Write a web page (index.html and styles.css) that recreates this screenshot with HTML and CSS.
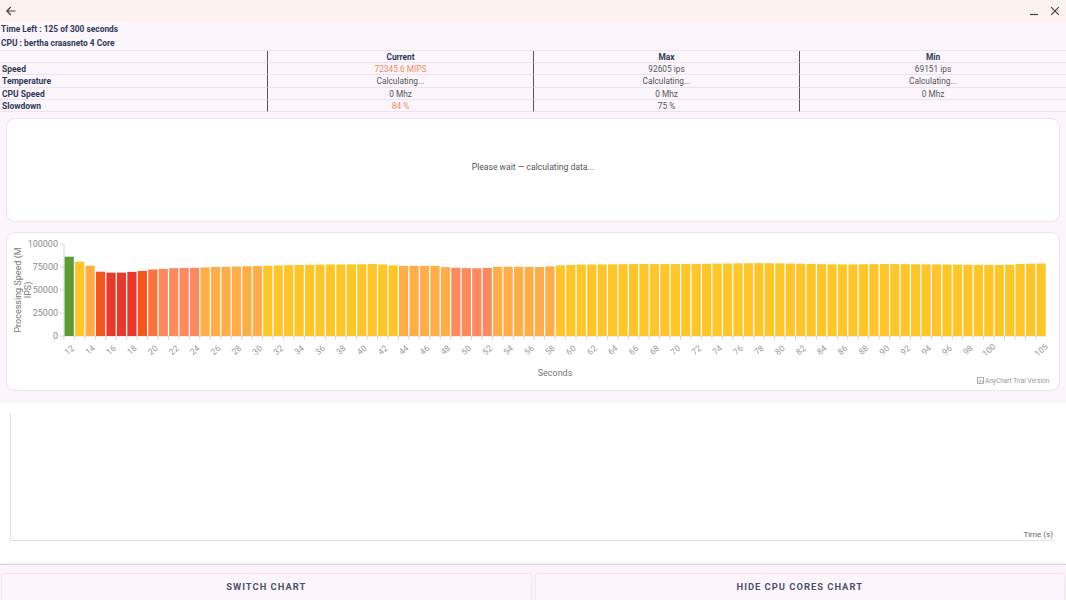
FILE: index.html
```html
<!DOCTYPE html>
<html lang="en">
    <head>
        <meta charset="UTF-8">
        <meta name="viewport" content="width=device-width, initial-scale=1.0">
        <title>CPU Benchmark</title>
        <link rel="stylesheet" href="styles.css">
    </head>

    <body>
        <header class="topbar">
            <button class="icon-btn" aria-label="Back">
                <svg width="12" height="12" viewBox="0 0 12 12"><path d="M10.5 6H1.8M5.8 2L1.8 6l4 4" fill="none" stroke="#444" stroke-width="1.2"/></svg>
            </button>
            <div class="window-btns">
                <button class="icon-btn" aria-label="Minimize">
                    <svg width="12" height="12" viewBox="0 0 12 12"><path d="M2 9.5h8" stroke="#444" stroke-width="1.2"/></svg>
                </button>
                <button class="icon-btn" aria-label="Close">
                    <svg width="12" height="12" viewBox="0 0 12 12"><path d="M2.2 2.2l7.6 7.6M9.8 2.2l-7.6 7.6" stroke="#444" stroke-width="1.2"/></svg>
                </button>
            </div>
        </header>

        <div class="info">
            <p>Time Left : 125 of 300 seconds</p>
            <p>CPU : bertha craasneto 4 Core</p>
        </div>

        <div class="stats">
            <div class="cell label"></div>
            <div class="cell head">Current</div>
            <div class="cell head">Max</div>
            <div class="cell head">Min</div>

            <div class="cell label">Speed</div>
            <div class="cell warn">72345.6 MIPS</div>
            <div class="cell">92605 ips</div>
            <div class="cell">69151 ips</div>

            <div class="cell label">Temperature</div>
            <div class="cell">Calculating...</div>
            <div class="cell">Calculating...</div>
            <div class="cell">Calculating...</div>

            <div class="cell label">CPU Speed</div>
            <div class="cell">0 Mhz</div>
            <div class="cell">0 Mhz</div>
            <div class="cell">0 Mhz</div>

            <div class="cell label">Slowdown</div>
            <div class="cell warn">84 %</div>
            <div class="cell">75 %</div>
            <div class="cell"></div>
        </div>

        <section class="card wait-card">
            <p>Please wait — calculating data...</p>
        </section>

        <section class="card chart-card">
            <svg id="speed-chart" width="1054" height="159" viewBox="6 232 1054 159"></svg>
        </section>

        <section class="cores">
            <div class="cores-plot">
                <span class="cores-axis">Time (s)</span>
            </div>
        </section>

        <footer class="actions">
            <button class="action-btn">SWITCH CHART</button>
            <button class="action-btn">HIDE CPU CORES CHART</button>
        </footer>

        <script>
            // valores em milhares de MIPS, um por segundo (12 a 105)
            const values = [86.2, 80.8, 76.4, 69.9, 68.8, 68.9, 69.7, 70.8, 72.3, 73.0, 73.7, 74.0, 74.1,
                74.5, 75.0, 75.2, 75.5, 75.8, 76.0, 76.4, 76.7, 77.0, 77.2, 77.4, 77.6, 77.7, 77.8, 77.9,
                78.0, 78.2, 77.8, 76.8, 76.3, 76.3, 76.2, 76.2, 74.9, 74.2, 73.8, 73.6, 73.9, 75.2, 75.4,
                75.2, 75.1, 75.0, 75.7, 76.8, 77.3, 77.6, 77.7, 77.8, 77.9, 78.1, 78.2, 78.3, 78.3, 78.2,
                78.2, 78.3, 78.4, 78.5, 78.7, 78.8, 79.0, 79.1, 79.2, 79.1, 79.0, 78.8, 78.6, 78.4, 78.1,
                77.9, 77.8, 77.8, 78.0, 78.1, 78.2, 78.2, 78.1, 78.0, 77.9, 77.8, 77.7, 77.6, 77.5, 77.4,
                77.4, 77.3, 77.5, 78.2, 78.6, 78.8]

            const palette = {g: '#5f9b36', y: '#fdc62b', o: '#fdae4b', s: '#fc8a61', f: '#f7743f', r: '#f4561f', R: '#e8392f'}
            const colors = 'gyorRRRrfssss' + 'oooooo' + 'yyyyyyyyyyyyy' + 'ooooo' + 'ssss' + 'oooooo' + 'y'.repeat(47)

            const chart = document.getElementById('speed-chart')
            const plotLeft = 64, plotTop = 244, plotBottom = 336, slot = 10.45
            const scale = (plotBottom - plotTop) / 100
            let out = ''

            // eixo Y
            ;[100000, 75000, 50000, 25000, 0].forEach((v, i) => {
                const y = plotTop + i * (plotBottom - plotTop) / 4
                out += `<text class="ylabel" x="58" y="${y + 3}" text-anchor="end">${v}</text>`
                out += `<line x1="60" x2="64" y1="${y}" y2="${y}" class="axis"/>`
            })
            out += `<line x1="${plotLeft}" x2="${plotLeft}" y1="${plotTop}" y2="${plotBottom}" class="axis"/>`
            out += `<line x1="${plotLeft}" x2="${plotLeft + slot * values.length}" y1="${plotBottom}" y2="${plotBottom}" class="axis"/>`

            values.forEach((v, i) => {
                const x = plotLeft + i * slot
                const h = v * scale
                out += `<rect x="${x + 0.6}" y="${plotBottom - h}" width="${slot - 1.2}" height="${h}" fill="${palette[colors[i]]}"/>`
                out += `<line x1="${x}" x2="${x}" y1="${plotBottom}" y2="${plotBottom + 4}" class="axis"/>`
                const sec = i + 12
                if ((sec % 2 === 0 && sec <= 100) || sec === 105) {
                    const cx = x + slot / 2
                    out += `<text class="xlabel" x="${cx}" y="353" text-anchor="middle" transform="rotate(-40 ${cx} 350)">${sec}</text>`
                }
            })

            out += `<text class="title" x="555" y="376" text-anchor="middle">Seconds</text>`
            out += `<text class="title" transform="translate(21 290) rotate(-90)" text-anchor="middle">Processing Speed (M</text>`
            out += `<text class="title" transform="translate(31 290) rotate(-90)" text-anchor="middle">IPS)</text>`
            out += `<rect x="977.5" y="377.5" width="6" height="6" fill="none" stroke="#999" stroke-width="0.8"/>`
            out += `<path d="M979 382.5v-2M980.7 382.5v-3M982.4 382.5v-1.5" stroke="#999" stroke-width="0.8"/>`
            out += `<text class="credit" x="985" y="383">AnyChart Trial Version</text>`

            chart.innerHTML = out
        </script>
    </body>
</html>
```

FILE: styles.css
```css
*{
    font-family: Roboto, "Liberation Sans", Arial, sans-serif;
    box-sizing: border-box;
}

body, p{
    margin: 0;
    padding: 0;
}

body{
    width: 1066px;
    height: 600px;
    overflow: hidden;
    background: #fcf5fb;
    display: flex;
    flex-direction: column;
}

button{
    border: none;
    background: none;
    padding: 0;
    cursor: pointer;
}

.topbar{
    height: 22px;
    display: flex;
    align-items: center;
    justify-content: space-between;
    background: #fcf2ee;
    padding: 0 5px;
}
.icon-btn{
    width: 12px;
    height: 12px;
    display: flex;
}
.window-btns{
    display: flex;
    gap: 9px;
}

.info{
    display: flex;
    flex-direction: column;
}
.info p{
    height: 14px;
    line-height: 15px;
    font-size: 8.4px;
    font-weight: bold;
    color: #2e3a59;
    padding-left: 1px;
}

.stats{
    display: grid;
    grid-template-columns: 267px 266px 266px 1fr;
    border-top: 1px solid #ece3ec;
}
.cell{
    height: 12.2px;
    line-height: 12.4px;
    font-size: 8.3px;
    color: #555;
    text-align: center;
    border-bottom: 1px solid #ece3ec;
    border-left: 1px solid #555;
}
.cell.label{
    border-left: none;
    text-align: left;
    padding-left: 2px;
    font-size: 8.5px;
    font-weight: bold;
    color: #2e3a59;
}
.cell.head{
    font-weight: bold;
    color: #2e3a59;
}
.cell.warn{
    color: #f28c60;
}

.card{
    margin: 0 6px;
    background: #fff;
    border: 1px solid #eee4ee;
    border-radius: 9px;
}
.wait-card{
    margin-top: 6px;
    height: 104px;
    display: flex;
    align-items: center;
    justify-content: center;
}
.wait-card p{
    font-size: 8.6px;
    color: #555;
    margin-bottom: 6px;
}
.chart-card{
    margin-top: 10px;
    height: 159px;
    overflow: hidden;
}
.chart-card svg{
    display: block;
    margin: -1px;
}
.axis{
    stroke: #d8d8d8;
    stroke-width: 1;
}
.ylabel{
    font-size: 9px;
    fill: #8c8c8c;
}
.xlabel{
    font-size: 8.5px;
    fill: #9a9a9a;
}
.title{
    font-size: 9px;
    fill: #777;
}
.credit{
    font-size: 6.5px;
    fill: #999;
}

.cores{
    margin-top: 12px;
    height: 161px;
    background: #fff;
    padding: 10px 13px 23px 10px;
}
.cores-plot{
    height: 100%;
    border-left: 1px solid #e0e0e0;
    border-bottom: 1px solid #e0e0e0;
    display: flex;
    align-items: flex-end;
    justify-content: flex-end;
}
.cores-axis{
    font-size: 8px;
    color: #666;
    padding-bottom: 1px;
}

.actions{
    flex: 1;
    border-top: 1px solid #d6d0da;
    box-shadow: 0 -1px 2px rgba(0, 0, 0, 0.06);
    background: linear-gradient(#fbf4fb, #fcf1ef);
    display: flex;
    gap: 3px;
    padding: 8px 1px 0 1px;
}
.action-btn{
    flex: 1;
    border: 1px solid #f0e8f0;
    border-bottom: none;
    border-radius: 3px 3px 0 0;
    background: #fcf5fb;
    font-size: 9.4px;
    font-weight: bold;
    letter-spacing: 1px;
    color: #4b5170;
}
```
